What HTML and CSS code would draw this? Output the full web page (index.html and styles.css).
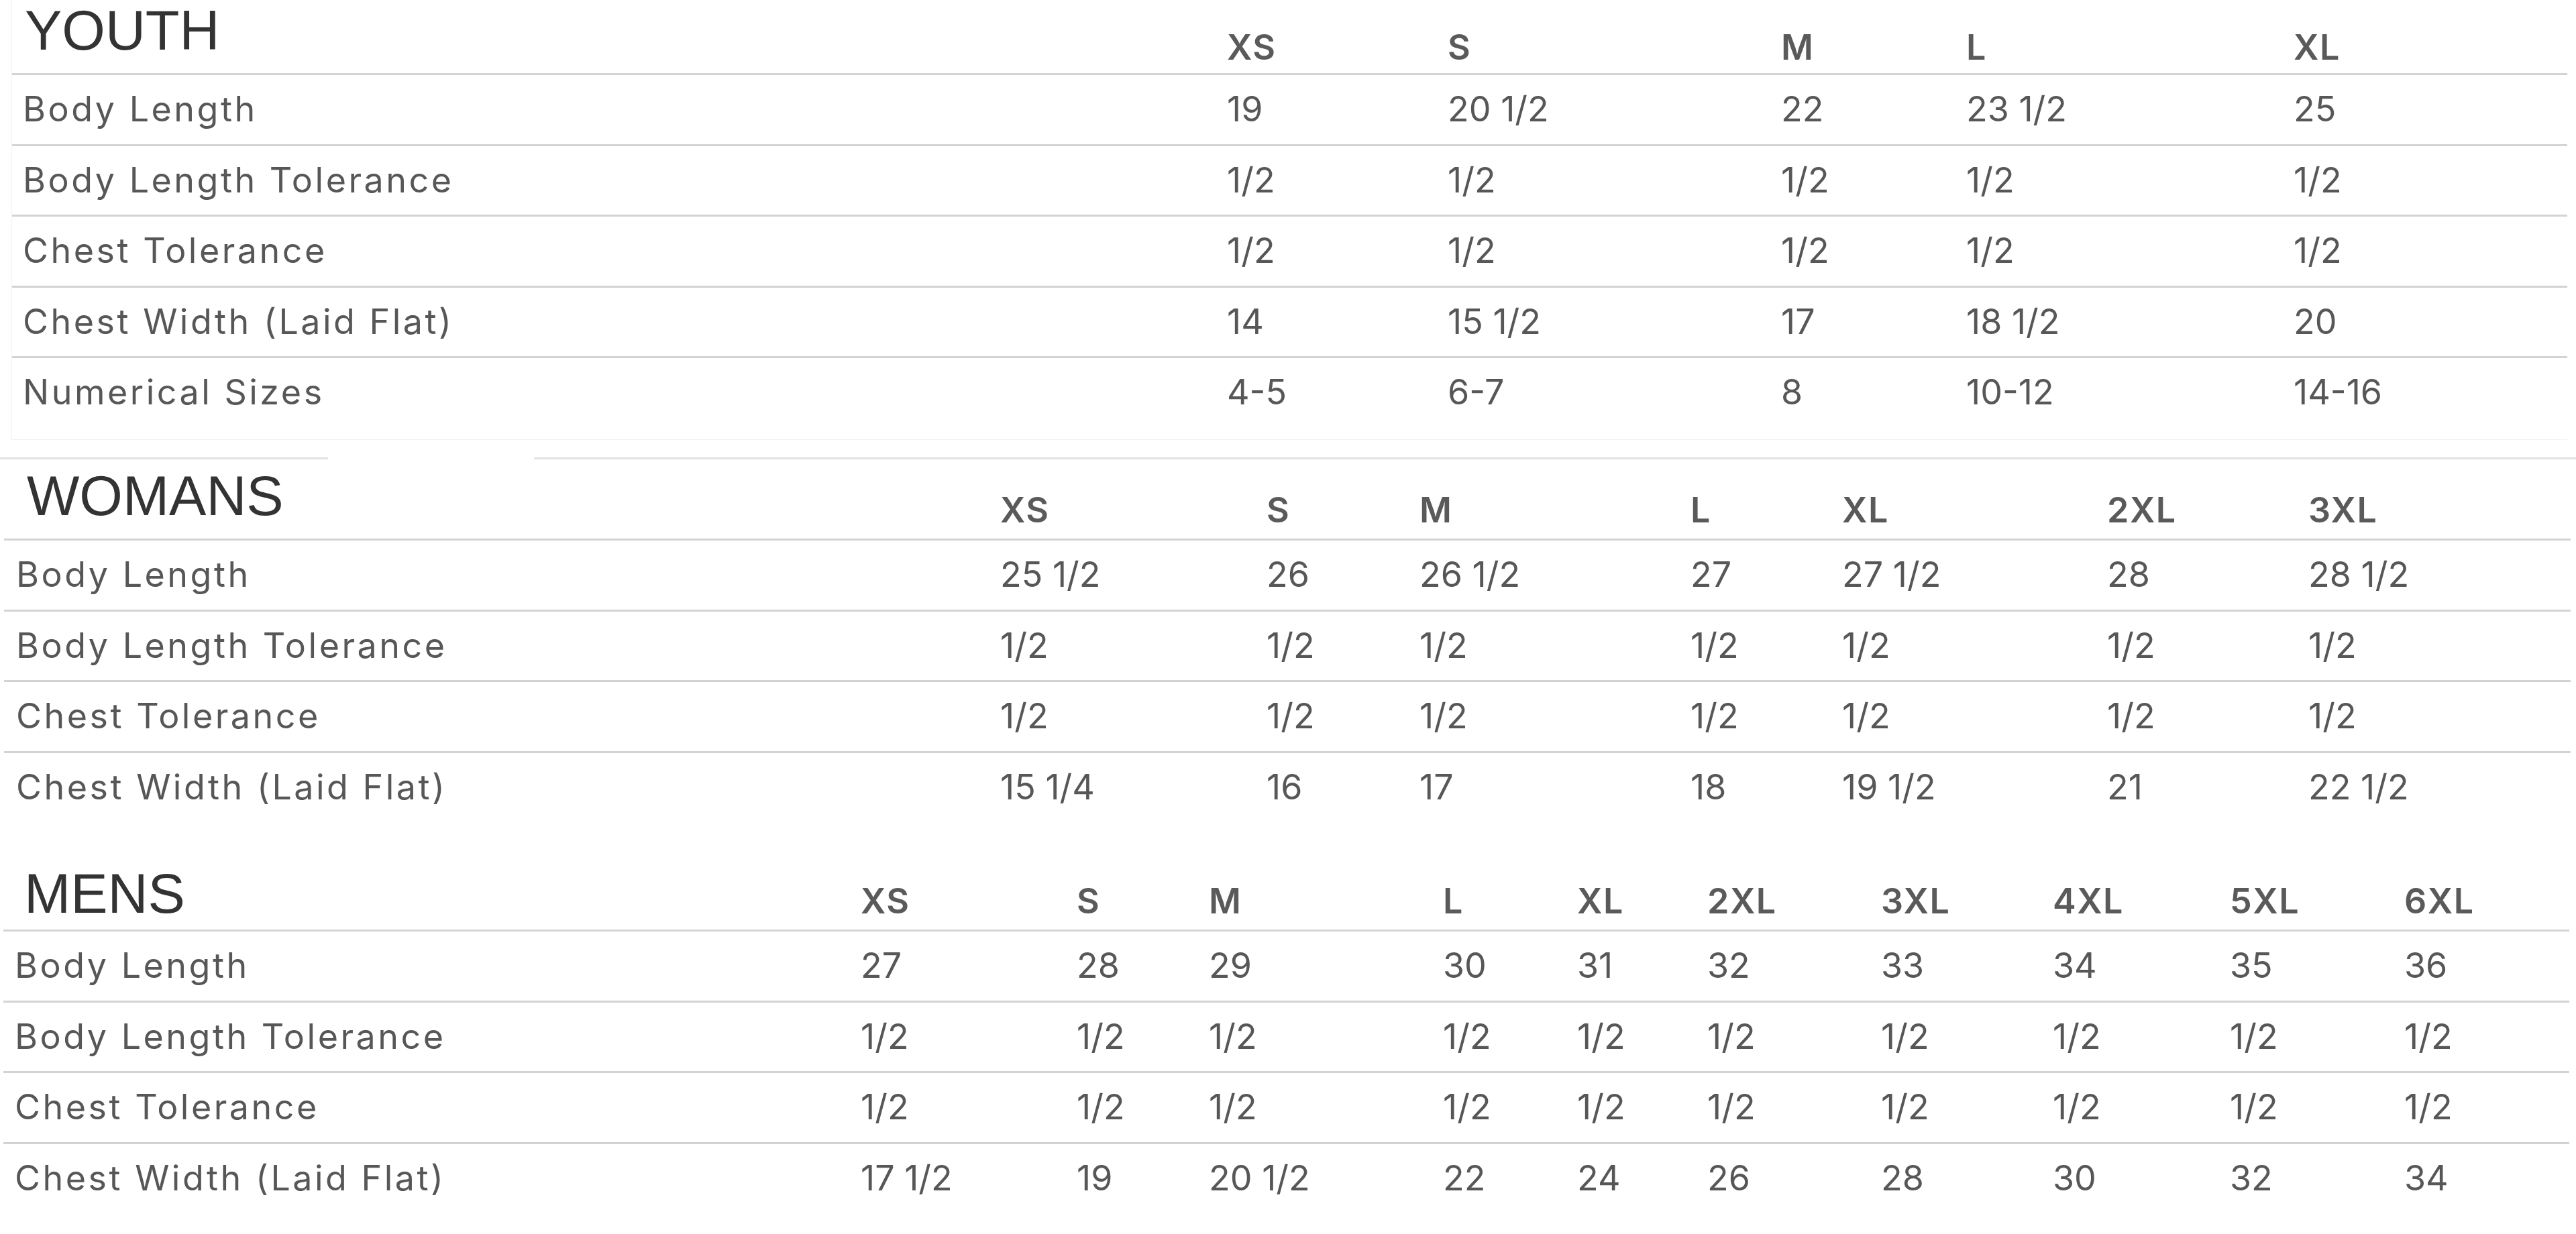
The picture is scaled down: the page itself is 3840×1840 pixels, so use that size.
FILE: index.html
```html
<!DOCTYPE html>
<html lang="en">
<head>
<meta charset="utf-8">
<title>Size Chart</title>
<link rel="stylesheet" href="styles.css">
</head>
<body>
<main class="page">
  <section class="chart chart--youth">
    <div class="row row--head">
      <h2 class="title">YOUTH</h2>
      <span class="size">XS</span><span class="size">S</span><span class="size">M</span><span class="size">L</span><span class="size">XL</span>
    </div>
    <div class="row"><span class="label">Body Length</span><span>19</span><span>20 1/2</span><span>22</span><span>23 1/2</span><span>25</span></div>
    <div class="row"><span class="label">Body Length Tolerance</span><span>1/2</span><span>1/2</span><span>1/2</span><span>1/2</span><span>1/2</span></div>
    <div class="row"><span class="label">Chest Tolerance</span><span>1/2</span><span>1/2</span><span>1/2</span><span>1/2</span><span>1/2</span></div>
    <div class="row"><span class="label">Chest Width (Laid Flat)</span><span>14</span><span>15 1/2</span><span>17</span><span>18 1/2</span><span>20</span></div>
    <div class="row row--last"><span class="label">Numerical Sizes</span><span>4-5</span><span>6-7</span><span>8</span><span>10-12</span><span>14-16</span></div>
  </section>

  <div class="divider"><span class="divider__seg divider__seg--left"></span><span class="divider__seg divider__seg--right"></span></div>

  <section class="chart chart--women">
    <div class="row row--head">
      <h2 class="title">WOMANS</h2>
      <span class="size">XS</span><span class="size">S</span><span class="size">M</span><span class="size">L</span><span class="size">XL</span><span class="size">2XL</span><span class="size">3XL</span>
    </div>
    <div class="row"><span class="label">Body Length</span><span>25 1/2</span><span>26</span><span>26 1/2</span><span>27</span><span>27 1/2</span><span>28</span><span>28 1/2</span></div>
    <div class="row"><span class="label">Body Length Tolerance</span><span>1/2</span><span>1/2</span><span>1/2</span><span>1/2</span><span>1/2</span><span>1/2</span><span>1/2</span></div>
    <div class="row"><span class="label">Chest Tolerance</span><span>1/2</span><span>1/2</span><span>1/2</span><span>1/2</span><span>1/2</span><span>1/2</span><span>1/2</span></div>
    <div class="row row--last"><span class="label">Chest Width (Laid Flat)</span><span>15 1/4</span><span>16</span><span>17</span><span>18</span><span>19 1/2</span><span>21</span><span>22 1/2</span></div>
  </section>

  <section class="chart chart--men">
    <div class="row row--head">
      <h2 class="title">MENS</h2>
      <span class="size">XS</span><span class="size">S</span><span class="size">M</span><span class="size">L</span><span class="size">XL</span><span class="size">2XL</span><span class="size">3XL</span><span class="size">4XL</span><span class="size">5XL</span><span class="size">6XL</span>
    </div>
    <div class="row"><span class="label">Body Length</span><span>27</span><span>28</span><span>29</span><span>30</span><span>31</span><span>32</span><span>33</span><span>34</span><span>35</span><span>36</span></div>
    <div class="row"><span class="label">Body Length Tolerance</span><span>1/2</span><span>1/2</span><span>1/2</span><span>1/2</span><span>1/2</span><span>1/2</span><span>1/2</span><span>1/2</span><span>1/2</span><span>1/2</span></div>
    <div class="row"><span class="label">Chest Tolerance</span><span>1/2</span><span>1/2</span><span>1/2</span><span>1/2</span><span>1/2</span><span>1/2</span><span>1/2</span><span>1/2</span><span>1/2</span><span>1/2</span></div>
    <div class="row row--last"><span class="label">Chest Width (Laid Flat)</span><span>17 1/2</span><span>19</span><span>20 1/2</span><span>22</span><span>24</span><span>26</span><span>28</span><span>30</span><span>32</span><span>34</span></div>
  </section>
</main>
</body>
</html>
```

FILE: styles.css
```css
html, body {
  margin: 0;
  padding: 0;
  background: #ffffff;
}

.page {
  width: 3840px;
  height: 1840px;
  overflow: hidden;
  font-family: "Inter", "Liberation Sans", sans-serif;
  color: #575757;
}

.chart {
  display: flex;
  flex-direction: column;
}

.row {
  display: grid;
  align-items: center;
  height: 102.5px;
  border-bottom: 3px solid #d3d3d3;
  font-size: 52px;
  line-height: 1;
  white-space: nowrap;
}

.row--last {
  border-bottom: none;
}

.row--head {
  align-items: end;
}

.label {
  letter-spacing: 3.5px;
}

.title {
  margin: 0;
  font-family: "Liberation Sans", Arial, sans-serif;
  font-weight: 400;
  font-size: 83px;
  line-height: 1.12;
  color: #333333;
}

.size {
  font-weight: 600;
  color: #5a5a5a;
  letter-spacing: 1.5px;
  padding-bottom: 16px;
}

/* YOUTH */
.chart--youth {
  margin-left: 17px;
  width: 3809px;
  border-left: 1px solid #f1f1f1;
  border-bottom: 1px solid #f1f1f1;
  padding-bottom: 18px;
}

.chart--youth .row {
  padding-left: 16px;
  grid-template-columns: 1795px 329px 497px 276px 488px 1fr;
}

.chart--youth .row--head {
  height: 109px;
}

.chart--youth .title {
  margin-left: 3px;
  padding-bottom: 20px;
}

/* divider under youth */
.divider {
  display: flex;
  margin-top: 26.5px;
  height: 3px;
}

.divider__seg {
  display: block;
  height: 3px;
  background: #e2e2e2;
}

.divider__seg--left {
  width: 489px;
}

.divider__seg--right {
  margin-left: 307px;
  flex: 1;
}

/* WOMANS */
.chart--women {
  margin-left: 6px;
  width: 3826px;
}

.chart--women .row {
  padding-left: 18px;
  grid-template-columns: 1467px 397px 228px 404px 226px 395px 300px 1fr;
}

.chart--women .row--head {
  height: 118px;
}

.chart--women .title {
  margin-left: 16px;
  padding-bottom: 16px;
}

/* MENS */
.chart--men {
  margin-left: 5px;
  width: 3825px;
}

.chart--men .row {
  padding-left: 17px;
  grid-template-columns: 1261px 322px 197px 349px 200px 194px 259px 256px 264px 260px 1fr;
}

.chart--men .row--head {
  height: 161px;
}

.chart--men .title {
  margin-left: 14px;
  padding-bottom: 6px;
}
```
